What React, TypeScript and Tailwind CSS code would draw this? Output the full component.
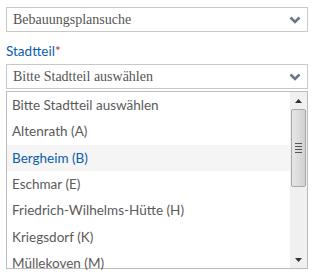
import React from 'react';

const districts = [
  'Bitte Stadtteil auswählen',
  'Altenrath (A)',
  'Bergheim (B)',
  'Eschmar (E)',
  'Friedrich-Wilhelms-Hütte (H)',
  'Kriegsdorf (K)',
  'Müllekoven (M)',
];

function Chevron() {
  return (
    <svg width="12" height="8" viewBox="0 0 12 8" className="shrink-0">
      <path d="M1.5 1.5 L6 6 L10.5 1.5" fill="none" stroke="#6b7785" strokeWidth="2.6" />
    </svg>
  );
}

function SelectBox({ label }: { label: string }) {
  return (
    <div className="flex h-[25px] items-center justify-between border border-[#c8c8c8] bg-white pl-[6px] pr-[6px]">
      <span className="font-['Liberation_Serif',serif] text-[14px] text-[#555]">{label}</span>
      <Chevron />
    </div>
  );
}

function Scrollbar() {
  return (
    <div className="flex w-[17px] flex-col items-center bg-[#f0f0f0]">
      <div className="flex h-[17px] w-full items-center justify-center">
        <svg width="7" height="4" viewBox="0 0 7 4"><path d="M0 4 L3.5 0 L7 4 Z" fill="#333" /></svg>
      </div>
      <div className="flex h-[78px] w-[15px] flex-col items-center justify-center gap-[2px] rounded-[2px] border border-[#a8a8a8] bg-gradient-to-r from-[#e6e6e6] via-[#dcdcdc] to-[#d0d0d0]">
        <div className="h-px w-[7px] bg-[#555]" />
        <div className="h-px w-[7px] bg-[#555]" />
        <div className="h-px w-[7px] bg-[#555]" />
        <div className="h-px w-[7px] bg-[#555]" />
      </div>
      <div className="flex-1" />
      <div className="flex h-[17px] w-full items-center justify-center">
        <svg width="7" height="4" viewBox="0 0 7 4"><path d="M0 0 L3.5 4 L7 0 Z" fill="#333" /></svg>
      </div>
    </div>
  );
}

export default function App() {
  return (
    <div className="h-[278px] w-[314px] overflow-hidden bg-white px-[6px] pt-[7px]">
      <SelectBox label="Bebauungsplansuche" />
      <div className="mt-[10px] font-['Lato',sans-serif] text-[13.5px] leading-[18px] text-[#0a5db0]">
        Stadtteil<span className="text-[#b8322a]">*</span>
      </div>
      <div className="mt-[4px]">
        <SelectBox label="Bitte Stadtteil auswählen" />
      </div>
      <div className="mt-[2px] flex h-[178px] border border-[#bcbcbc] bg-white">
        <ul className="flex-1 font-['Lato',sans-serif] text-[13.5px]">
          {districts.map((d) => (
            <li
              key={d}
              className={
                'flex h-[26.3px] items-center pl-[5px] ' +
                (d === 'Bergheim (B)' ? 'bg-[#f5f5f5] text-[#0a5db0]' : 'text-[#5a5a5a]')
              }
            >
              {d}
            </li>
          ))}
        </ul>
        <Scrollbar />
      </div>
    </div>
  );
}
